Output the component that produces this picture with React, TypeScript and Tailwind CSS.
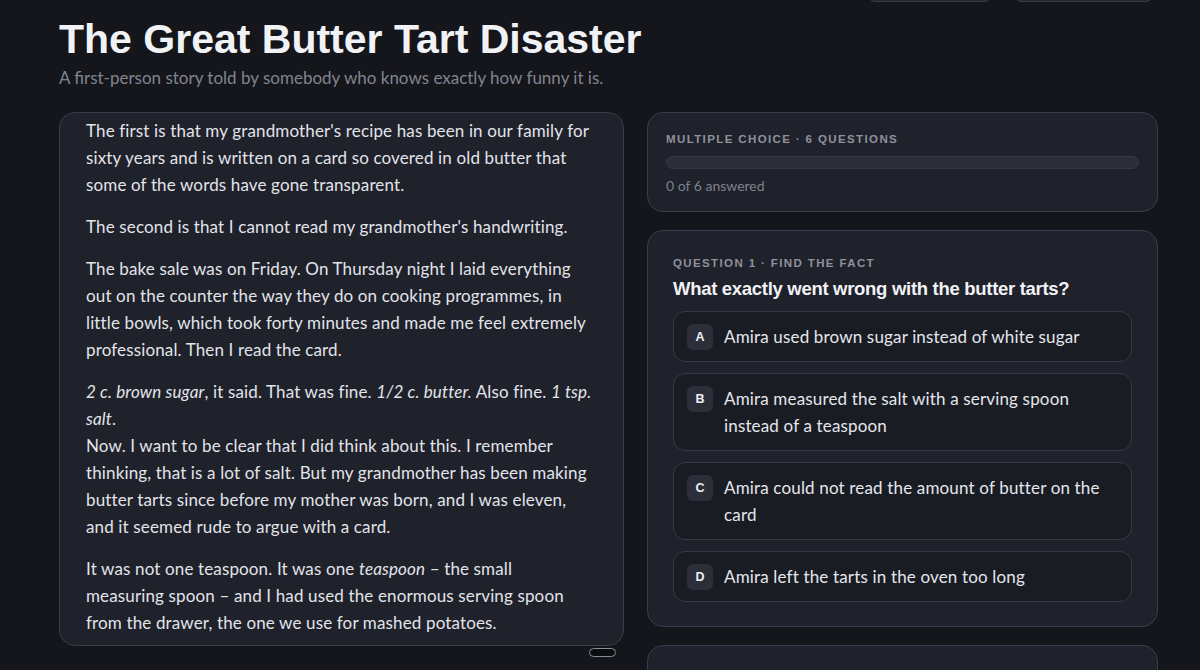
import React from 'react';

const options = [
  { key: 'A', text: 'Amira used brown sugar instead of white sugar' },
  { key: 'B', text: 'Amira measured the salt with a serving spoon instead of a teaspoon' },
  { key: 'C', text: 'Amira could not read the amount of butter on the card' },
  { key: 'D', text: 'Amira left the tarts in the oven too long' },
];

const body = { fontFamily: 'Lato, "Open Sans", sans-serif' };
const heading = { fontFamily: '"Liberation Sans", Arial, sans-serif' };

export default function App() {
  return (
    <div className="min-h-screen bg-[#15161c] text-[#e4e6ec] overflow-hidden" style={body}>
      <div className="pl-[59px] pr-[42px]">
        {/* top actions, mostly scrolled out of view */}
        <div className="flex justify-end gap-[18px] -mt-[34px] pr-[3px]">
          <button className="w-[128px] h-[36px] rounded-[10px] bg-[#23262f] border border-[#3a3e4b]" />
          <button className="w-[143px] h-[36px] rounded-[10px] bg-[#23262f] border border-[#3a3e4b]" />
        </div>

        <h1
          className="text-[41px] leading-[48px] font-bold text-[#f1f2f6] mt-[13px]"
          style={heading}
        >
          The Great Butter Tart Disaster
        </h1>
        <p className="text-[17px] leading-[24px] text-[#80848f] mt-[3px]">
          A first-person story told by somebody who knows exactly how funny it is.
        </p>

        <div className="flex gap-[23px] mt-[22px] items-start">
          {/* story text */}
          <div className="w-[565px] shrink-0 flex flex-col items-end">
            <div className="w-full h-[534px] overflow-hidden rounded-[16px] bg-[#1f212b] border border-[#393c4a] pl-[26px] pr-[30px] pt-[4px] text-[17px] leading-[27px] tracking-[0.14px] text-[#e2e4ea]">
              <p>
                The first is that my grandmother's recipe has been in our family for sixty years and is
                written on a card so covered in old butter that some of the words have gone transparent.
              </p>
              <p className="mt-[15px]">The second is that I cannot read my grandmother's handwriting.</p>
              <p className="mt-[15px]">
                The bake sale was on Friday. On Thursday night I laid everything out on the counter the way
                they do on cooking programmes, in little bowls, which took forty minutes and made me feel
                extremely professional. Then I read the card.
              </p>
              <p className="mt-[15px]">
                <em>2 c. brown sugar</em>, it said. That was fine. <em>1/2 c. butter.</em> Also fine.{' '}
                <em>1 tsp. salt</em>.
                <br />
                Now. I want to be clear that I did think about this. I remember thinking, that is a lot of
                salt. But my grandmother has been making butter tarts since before my mother was born, and I
                was eleven, and it seemed rude to argue with a card.
              </p>
              <p className="mt-[15px]">
                It was not one teaspoon. It was one <em>teaspoon</em> – the small measuring spoon – and I had
                used the enormous serving spoon from the drawer, the one we use for mashed potatoes.
              </p>
            </div>
            <div className="w-[27px] h-[9px] rounded-full border border-[#8a8d96] bg-[#0c0d10] mt-[2px] mr-[8px]" />
          </div>

          {/* quiz column */}
          <div className="w-[511px] shrink-0 flex flex-col gap-[18px]">
            <div className="rounded-[16px] bg-[#1f212b] border border-[#393c4a] px-[18px] pt-[18px] pb-[15px]">
              <div
                className="text-[11.5px] leading-[16px] font-bold tracking-[0.12em] text-[#8f929c] uppercase"
                style={heading}
              >
                Multiple choice · 6 questions
              </div>
              <div className="h-[13px] rounded-full bg-[#2b2e39] border border-[#353845] mt-[9px]" />
              <div className="text-[14px] leading-[20px] text-[#7d818c] mt-[7px]">0 of 6 answered</div>
            </div>

            <div className="rounded-[16px] bg-[#1f212b] border border-[#393c4a] px-[25px] pt-[24px] pb-[24px]">
              <div
                className="text-[11.5px] leading-[16px] font-bold tracking-[0.12em] text-[#8f929c] uppercase"
                style={heading}
              >
                Question 1 · Find the fact
              </div>
              <h2
                className="text-[18.5px] leading-[26px] font-bold text-[#f1f2f6] tracking-[-0.3px] mt-[5px]"
                style={heading}
              >
                What exactly went wrong with the butter tarts?
              </h2>
              <div className="flex flex-col gap-[11px] mt-[9px]">
                {options.map((o) => (
                  <div
                    key={o.key}
                    className="flex items-start gap-[11px] rounded-[12px] bg-[#1a1c24] border border-[#363946] pl-[13px] pr-[20px] py-[11px]"
                  >
                    <span
                      className="w-[26px] h-[26px] shrink-0 rounded-[6px] bg-[#2c2f3a] flex items-center justify-center text-[12.5px] font-bold text-[#eceef3] mt-[1px]"
                      style={heading}
                    >
                      {o.key}
                    </span>
                    <span className="text-[17px] leading-[27px] tracking-[0.16px] text-[#e4e6ec]">{o.text}</span>
                  </div>
                ))}
              </div>
            </div>

            <div className="h-[60px] rounded-[16px] bg-[#1f212b] border border-[#393c4a]" />
          </div>
        </div>
      </div>
    </div>
  );
}
